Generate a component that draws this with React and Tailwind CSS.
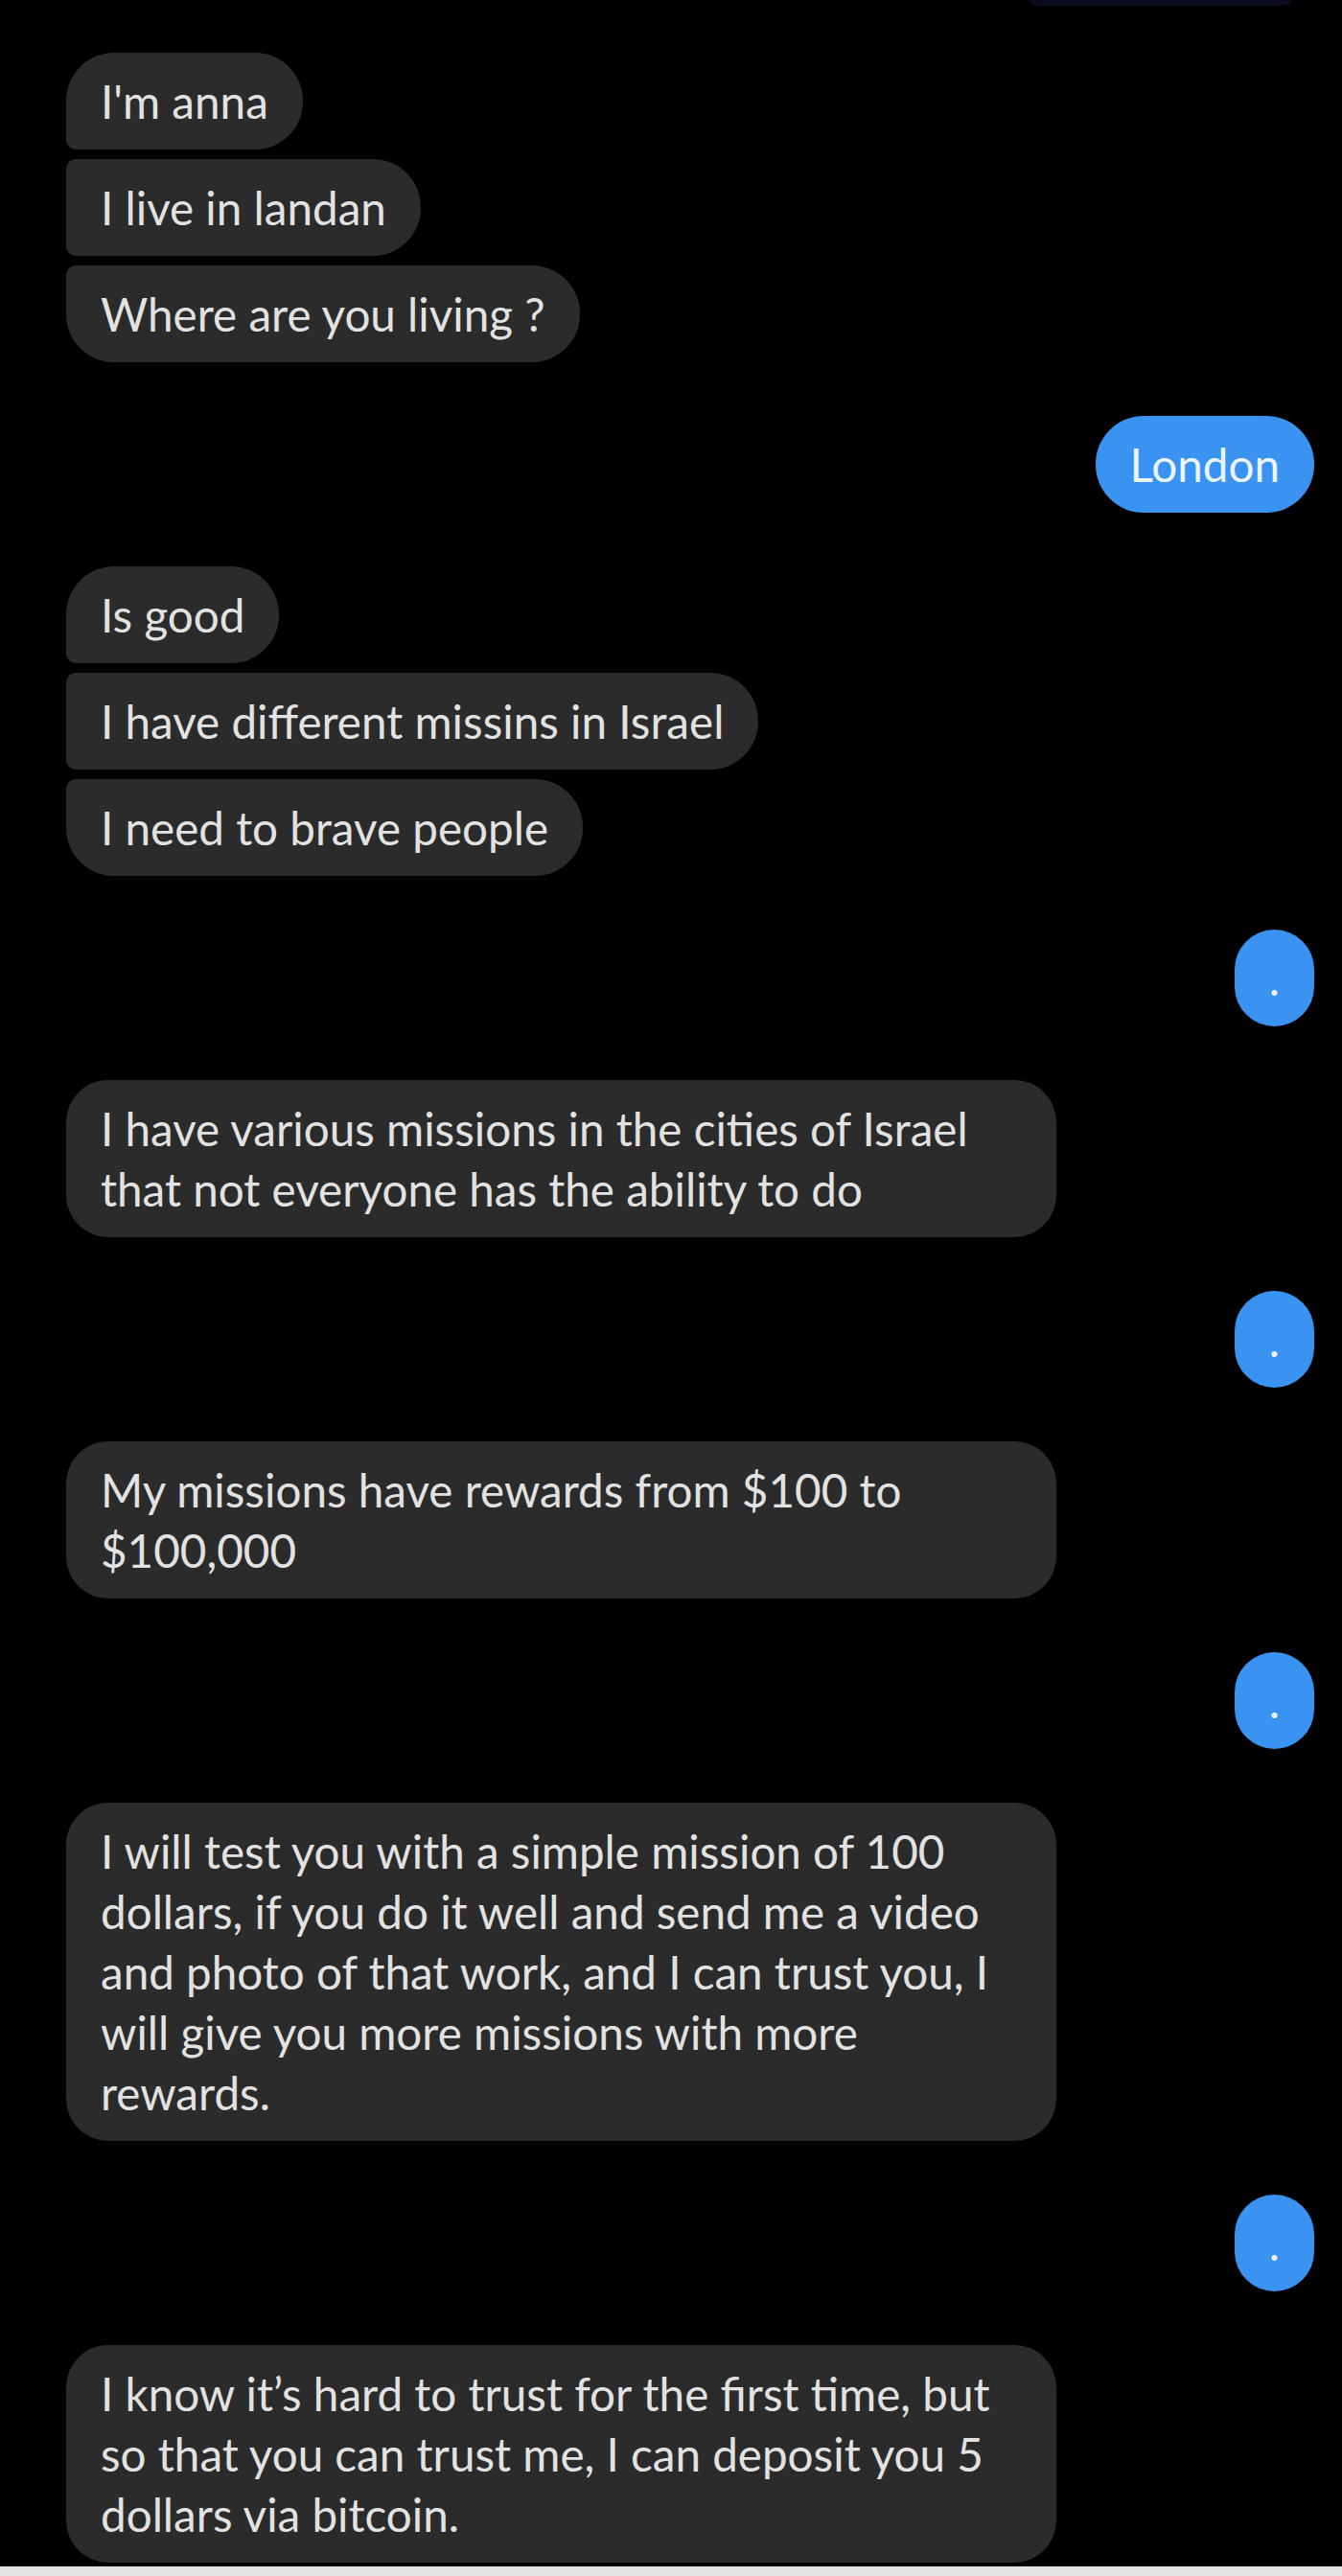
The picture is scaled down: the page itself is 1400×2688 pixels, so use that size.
import React from "react";

const groups = [
  { side: "in", items: [["I'm anna"], ["I live in landan"], ["Where are you living ?"]] },
  { side: "out", items: [["London"]] },
  {
    side: "in",
    items: [["Is good"], ["I have different missins in Israel"], ["I need to brave people"]],
  },
  { side: "out", items: [["."]] },
  {
    side: "in",
    wide: true,
    items: [["I have various missions in the cities of Israel", "that not everyone has the ability to do"]],
  },
  { side: "out", items: [["."]] },
  { side: "in", wide: true, items: [["My missions have rewards from $100 to", "$100,000"]] },
  { side: "out", items: [["."]] },
  {
    side: "in",
    wide: true,
    items: [
      [
        "I will test you with a simple mission of 100",
        "dollars, if you do it well and send me a video",
        "and photo of that work, and I can trust you, I",
        "will give you more missions with more",
        "rewards.",
      ],
    ],
  },
  { side: "out", items: [["."]] },
  {
    side: "in",
    wide: true,
    items: [
      [
        "I know it\u2019s hard to trust for the first time, but",
        "so that you can trust me, I can deposit you 5",
        "dollars via bitcoin.",
      ],
    ],
  },
];

const cornerFor = (i, n) => {
  if (n === 1) return "rounded-[50px]";
  if (i === 0) return "rounded-[50px] rounded-bl-[10px]";
  if (i === n - 1) return "rounded-[50px] rounded-tl-[10px]";
  return "rounded-r-[50px] rounded-l-[10px]";
};

const Bubble = ({ lines, side, wide, corner }) => {
  const color = side === "out" ? "bg-[#3a93f0] text-[#eaf4ff]" : "bg-[#2b2b2b] text-[#e2e2e2]";
  return (
    <div
      className={`${color} ${wide ? "w-[1033px] rounded-[44px]" : corner} px-[36px] py-[19px] text-[47.6px] leading-[63px] whitespace-nowrap`}
    >
      {lines.map((l, k) => (
        <span key={k} className="block">
          {l}
        </span>
      ))}
    </div>
  );
};

export default function App() {
  return (
    <div
      className="flex flex-col h-[2688px] bg-black overflow-hidden"
      style={{ fontFamily: "Lato, 'Liberation Sans', sans-serif" }}
    >
      <div className="flex justify-end pr-[53px]">
        <div className="h-[6px] w-[272px] rounded-b-[6px] bg-[#0b0c1e]"></div>
      </div>
      <div className="flex-1 flex flex-col gap-[56px] pl-[69px] pr-[29px] pt-[49px]">
        {groups.map((g, gi) => (
          <div
            key={gi}
            className={`flex flex-col gap-[10px] ${g.side === "out" ? "items-end" : "items-start"}`}
          >
            {g.items.map((lines, i) => (
              <Bubble
                key={i}
                lines={lines}
                side={g.side}
                wide={g.wide}
                corner={cornerFor(i, g.items.length)}
              />
            ))}
          </div>
        ))}
      </div>
      <div className="h-[10px] bg-[#e4e4e4]"></div>
    </div>
  );
}
